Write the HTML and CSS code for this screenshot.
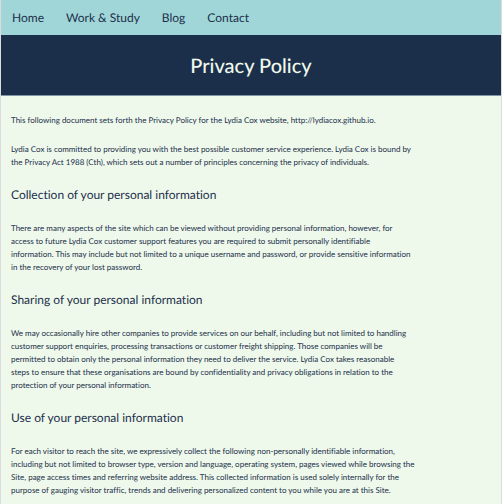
FILE: index.html
```html
<!DOCTYPE html>
<html lang="en">
<head>
<meta charset="utf-8">
<meta name="viewport" content="width=device-width, initial-scale=1">
<title>Privacy Policy</title>
<link rel="stylesheet" href="styles.css">
</head>
<body>
<nav class="nav">
<a href="#">Home</a>
<a href="#">Work &amp; Study</a>
<a href="#">Blog</a>
<a href="#">Contact</a>
</nav>
<header class="banner"><h1>Privacy Policy</h1></header>
<main class="policy">
<p>This following document sets forth the Privacy Policy for the Lydia Cox website, http://lydiacox.github.io.</p>
<p>Lydia Cox is committed to providing you with the best possible customer service experience. Lydia Cox is bound by the Privacy Act 1988 (Cth), which sets out a number of principles concerning the privacy of individuals.</p>
<h2>Collection of your personal information</h2>
<p>There are many aspects of the site which can be viewed without providing personal information, however, for access to future Lydia Cox customer support features you are required to submit personally identifiable<br> information. This may include but not limited to a unique username and password, or provide sensitive information in the recovery of your lost password.</p>
<h2>Sharing of your personal information</h2>
<p>We may occasionally hire other companies to provide services on our behalf, including but not limited to handling customer support enquiries, processing transactions or customer freight shipping. Those companies will be permitted to obtain only the personal information they need to deliver the service. Lydia Cox takes reasonable<br> steps to ensure that these organisations are bound by confidentiality and privacy obligations in relation to the<br> protection of your personal information.</p>
<h2>Use of your personal information</h2>
<p>For each visitor to reach the site, we expressively collect the following non-personally identifiable information, including but not limited to browser type, version and language, operating system, pages viewed while browsing the Site, page access times and referring website address. This collected information is used solely internally for the purpose of gauging visitor traffic, trends and delivering personalized content to you while you are at this Site.</p>
</main>
</body>
</html>
```

FILE: styles.css
```css
* {
  box-sizing: border-box;
}

html {
  background: #eef9ec;
}

body {
  margin: 0;
  font-family: Lato, "Liberation Sans", sans-serif;
  font-variant-ligatures: none;
  text-rendering: geometricPrecision;
  color: #1c2f4a;
  background: #eef9ec;
  border-left: 1px solid #dcdcdf;
  border-right: 1px solid #dcdcdf;
  min-height: 100vh;
}

.nav {
  display: flex;
  gap: 22px;
  padding: 9px 11px;
  background: #a0d6d8;
  font-size: 12px;
  line-height: 17px;
}

.nav a {
  color: inherit;
  text-decoration: none;
}

.banner {
  padding: 16px 10px 13px;
  background: #1c2f4a;
  border-bottom: 1px solid #8094a5;
  color: #eef9ec;
  text-align: center;
}

h1 {
  margin: 0;
  font-size: 20px;
  font-weight: 500;
  line-height: 31px;
}

.policy {
  max-width: 426px;
  padding: 18px 10px 0;
}

p {
  margin: 0 0 16px;
  font-size: 8px;
  line-height: 13px;
}

p:last-child {
  margin-bottom: 0;
}

h2 {
  margin: 17px 0 19px;
  font-size: 12px;
  font-weight: 400;
  line-height: 17px;
}
```
